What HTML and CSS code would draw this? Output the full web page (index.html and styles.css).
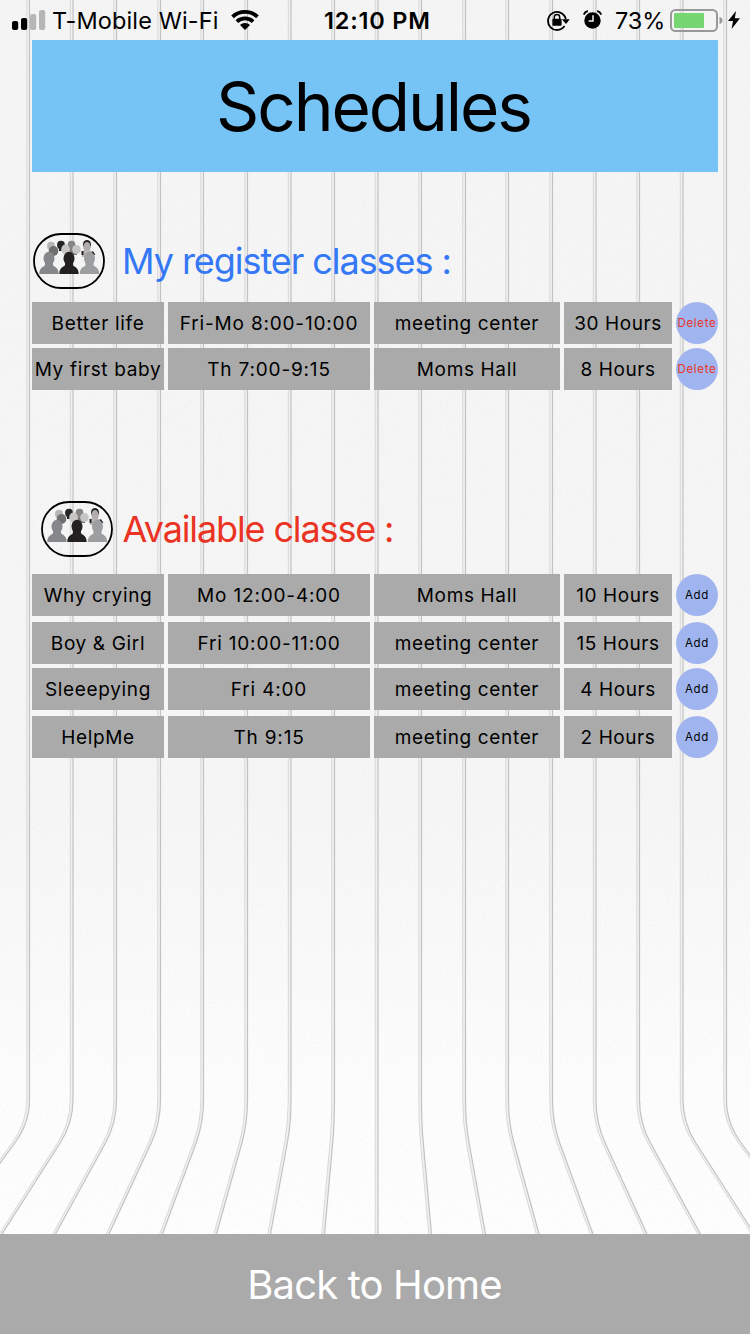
FILE: index.html
```html
<!DOCTYPE html>
<html lang="en">
<head>
<meta charset="utf-8">
<title>Schedules</title>
<link rel="stylesheet" href="styles.css">
</head>
<body>
<div class="screen">
  <svg class="backdrop" viewBox="0 0 750 1234" width="750" height="1234" fill="none" aria-hidden="true">
    <defs>
      <filter id="grain" x="0" y="0" width="100%" height="100%">
        <feTurbulence type="fractalNoise" baseFrequency="0.45" numOctaves="2" seed="4"/>
        <feColorMatrix values="0 0 0 0 0.5  0 0 0 0 0.5  0 0 0 0 0.5  0.22 0 0 0 -0.08"/>
      </filter>
      <g id="boards">
        <path d="M29.500 0V1100Q29.500 1123 14.800 1143L-52 1234"/>
        <path d="M73 0V1100Q73 1123 60.200 1143L2 1234"/>
        <path d="M116.500 0V1100Q116.500 1123 105.500 1143L55.500 1234"/>
        <path d="M160.500 0V1100Q160.500 1123 151.200 1143L109 1234"/>
        <path d="M203.500 0V1100Q203.500 1123 196.100 1143L162.500 1234"/>
        <path d="M247.500 0V1100Q247.500 1123 241.900 1143L216.500 1234"/>
        <path d="M291 0V1100Q291 1123 287.300 1143L270.500 1234"/>
        <path d="M334.500 0V1100Q334.500 1123 332.700 1143L324.500 1234"/>
        <path d="M378 0V1234"/>
        <path d="M421.500 0V1100Q421.500 1123 423.300 1143L431.500 1234"/>
        <path d="M465.500 0V1100Q465.500 1123 469.100 1143L485.500 1234"/>
        <path d="M508.500 0V1100Q508.500 1123 514 1143L539 1234"/>
        <path d="M552.500 0V1100Q552.500 1123 559.800 1143L593 1234"/>
        <path d="M596 0V1100Q596 1123 605.200 1143L647 1234"/>
        <path d="M639.500 0V1100Q639.500 1123 650.500 1143L700.500 1234"/>
        <path d="M683 0V1100Q683 1123 695.900 1143L754.500 1234"/>
        <path d="M726.500 0V1100Q726.500 1123 741.200 1143L808 1234"/>
      </g>
    </defs>
    <rect width="750" height="1234" filter="url(#grain)" class="grain"/>
    <use href="#boards" class="groove" x="-1.3"/>
    <use href="#boards" class="edge" x="-2.7"/>
    <use href="#boards" class="seam"/>
  </svg>

  <header class="status">
    <svg class="signal" width="34" height="20" viewBox="0 0 34 20"><rect x="0" y="11" width="6.200" height="9" rx="2"/><rect x="9" y="8" width="6.200" height="12" rx="2"/><g fill="#b6b6b6"><rect x="18" y="4" width="6.200" height="16" rx="2"/><rect x="27" y="0" width="6.200" height="20" rx="2"/></g></svg>
    <span class="carrier">T-Mobile Wi-Fi</span>
    <svg class="wifi" width="28" height="20" viewBox="0 0 28 20"><path d="M14 0C8.500 0 3.800 2 .2 5.400L2.900 8.200A16 16 0 0 1 25.100 8.200L27.800 5.400C24.200 2 19.500 0 14 0Z"/><path d="M14 6.600C10.300 6.600 7 8 4.600 10.200L7.200 12.900A10 10 0 0 1 20.800 12.900L23.400 10.200C21 8 17.700 6.600 14 6.600Z"/><path d="M14 13C12 13 10.300 13.700 9 15L14 20 19 15C17.700 13.700 16 13 14 13Z"/></svg>
    <span class="clock">12:10 PM</span>
    <svg class="lock" width="23" height="21" viewBox="0 0 23 21"><path d="M17.500 16A9 9 0 1 1 18.800 9" fill="none" stroke="#000" stroke-width="1.800"/><path d="M14.800 9.300H22.800L19 14Z"/><rect x="5.400" y="8.800" width="9.200" height="7" rx="1"/><path d="M7.300 9V7.200a2.700 2.700 0 0 1 5.400 0V9" fill="none" stroke="#000" stroke-width="1.500"/></svg>
    <svg class="alarm" width="19" height="20" viewBox="0 0 19 20"><circle cx="9.500" cy="10.500" r="8.200"/><path d="M.8 4.600Q1.800 1.800 4.800 1M18.200 4.600Q17.200 1.800 14.200 1" stroke="#000" stroke-width="1.900" fill="none"/><path d="M10 5.200V11H5.600" fill="none" stroke="#f4f4f4" stroke-width="1.500"/></svg>
    <span class="percent">73%</span>
    <svg class="battery" width="53" height="23" viewBox="0 0 53 23"><rect x="1" y="1" width="46" height="21" rx="4.500" fill="none" stroke="#999" stroke-width="2"/><rect x="4" y="4" width="30" height="15" rx="1" fill="#76d672"/><path d="M49.500 8Q52.500 8.800 52.500 11.500T49.500 15Z" fill="#999"/></svg>
    <svg class="bolt" width="12" height="18" viewBox="0 0 12 18"><path d="M8 0 0 10H5L3.600 18 12 7.300H6.800Z"/></svg>
  </header>

  <h1 class="title"><span>Schedules</span></h1>

  <main class="content">
    <section class="section registered">
      <div class="heading">
        <svg class="crowd" width="72" height="56" viewBox="0 0 72 56">
          <defs>
            <g id="person"><ellipse cx="0" cy="-14.500" rx="5.500" ry="6.700"/><path d="M-4-12V-8C-4.500-6-9.700-6.500-9.700 1H9.700C9.700-6.500 4.500-6 4-8V-12Z"/></g>
            <g id="small-head"><ellipse rx="3.900" ry="4.200"/><path d="M-2 3V6H2V3Z"/></g>
            <g id="group">
              <rect x="1" y="1" width="70" height="54" rx="27" fill="none" stroke="#000" stroke-width="1.800"/>
              <use href="#small-head" x="18" y="13" fill="#b5b5b5"/>
              <use href="#small-head" x="28" y="12" fill="#242424"/>
              <use href="#small-head" x="38.500" y="12" fill="#858585"/>
              <ellipse cx="54" cy="11.500" rx="4" ry="4.500" fill="#222"/>
              <ellipse cx="54" cy="14" rx="3.600" ry="5" fill="#b1abae"/>
              <path d="M51 17H57L60 21V24H49V20Z" fill="#b8b1b5"/>
              <path d="M49.500 18V22M59 18.500 61.500 22" stroke="#222" stroke-width="2"/>
              <ellipse cx="20.500" cy="18" rx="4.800" ry="5" fill="#6f6f6f"/>
              <path d="M36 17H44V22H38Z" fill="#777"/>
              <ellipse cx="32.500" cy="16.500" rx="4.300" ry="5" fill="#c9c5c3"/>
              <ellipse cx="43.500" cy="16.500" rx="4.300" ry="4.500" fill="#c5c5c5"/>
              <use href="#person" x="16" y="40" fill="#85878a"/>
              <use href="#person" x="56.500" y="40" fill="#9c9ea0"/>
              <use href="#person" x="36" y="40" fill="#222021"/>
            </g>
          </defs>
          <use href="#group"/>
        </svg>
        <h2 class="label blue">My register classes :</h2>
      </div>
      <div class="rows">
        <div class="row"><span>Better life</span><span class="time">Fri-Mo 8:00-10:00</span><span>meeting center</span><span class="hours">30 Hours</span><button class="delete">Delete</button></div>
        <div class="row"><span>My first baby</span><span class="time">Th 7:00-9:15</span><span>Moms Hall</span><span class="hours">8 Hours</span><button class="delete">Delete</button></div>
      </div>
    </section>

    <section class="section available">
      <div class="heading">
        <svg class="crowd" width="72" height="56" viewBox="0 0 72 56"><use href="#group"/></svg>
        <h2 class="label red">Available classe :</h2>
      </div>
      <div class="rows">
        <div class="row wide-gap"><span>Why crying</span><span class="time">Mo 12:00-4:00</span><span>Moms Hall</span><span class="hours">10 Hours</span><button class="add">Add</button></div>
        <div class="row"><span>Boy &amp; Girl</span><span class="time">Fri 10:00-11:00</span><span>meeting center</span><span class="hours">15 Hours</span><button class="add">Add</button></div>
        <div class="row wide-gap"><span>Sleeepying</span><span class="time">Fri 4:00</span><span>meeting center</span><span class="hours">4 Hours</span><button class="add">Add</button></div>
        <div class="row"><span>HelpMe</span><span class="time">Th 9:15</span><span>meeting center</span><span class="hours">2 Hours</span><button class="add">Add</button></div>
      </div>
    </section>
  </main>

  <footer class="home"><span>Back to Home</span></footer>
</div>
</body>
</html>
```
FILE: styles.css
```css
* { box-sizing: border-box; }
body { margin: 0; font-family: Inter, "Liberation Sans", sans-serif; color: #000; }
.screen {
  position: relative;
  isolation: isolate;
  display: flex;
  flex-direction: column;
  width: 750px;
  height: 1334px;
  overflow: hidden;
  background: linear-gradient(#f5f5f5 0, #f6f6f6 800px, #fdfdfd 1080px, #fefefe 1234px);
}
.backdrop { position: absolute; inset: 0; z-index: -1; }
.grain { opacity: .6; }
.groove { stroke: #f0f0f0; stroke-width: 2; }
.edge { stroke: #d8d8d8; stroke-width: 1; }
.seam { stroke: #c2c2c2; stroke-width: 1.2; }

.status { display: flex; align-items: center; height: 40px; padding-left: 12px; white-space: nowrap; }
.status svg { flex: none; }
.signal { margin-right: 6px; }
.carrier { width: 168px; font-size: 23.5px; letter-spacing: .12px; }
.wifi { margin-left: 11px; }
.clock { width: 108px; margin-left: 65px; padding-top: 1px; font-size: 23.5px; font-weight: 600; letter-spacing: .8px; }
.lock { margin-left: 115px; }
.alarm { margin-left: 13px; }
.percent { width: 49px; margin-left: 13px; font-size: 23.5px; letter-spacing: -.1px; }
.battery { margin-left: 6px; }
.bolt { margin-left: 5px; }

.title {
  display: flex;
  align-items: center;
  justify-content: center;
  height: 132px;
  margin: 0 32px;
  padding-right: 3px;
  background: #76c4f5;
  font-size: 67.5px;
  font-weight: 400;
  letter-spacing: -2.1px;
}
.content { flex: 1; padding: 61px 32px 0; }
.heading { display: flex; align-items: center; height: 56px; }
.registered .heading { padding-left: 1px; gap: 17px; }
.available { padding-top: 111px; }
.available .heading { padding-left: 8.5px; gap: 10px; }
.label { margin: 0; font-size: 36px; font-weight: 400; letter-spacing: -1.05px; white-space: nowrap; }
.blue { color: #3478f6; }
.red { color: #eb3323; letter-spacing: -1.13px; }
.rows { display: flex; flex-direction: column; gap: 4px; margin-top: 13px; }
.available .rows { margin-top: 17px; }
.row { display: grid; grid-template-columns: 132px 202px 186px 108px 42px; gap: 4px; height: 42px; }
.wide-gap { margin-bottom: 2px; }
.row span {
  display: flex;
  align-items: center;
  justify-content: center;
  background: #aaa;
  font-size: 19px;
  letter-spacing: .65px;
  white-space: nowrap;
}
.row .time { letter-spacing: .82px; }
.row .hours { letter-spacing: .57px; }
.row button {
  display: flex;
  align-items: center;
  justify-content: center;
  width: 42px;
  height: 42px;
  padding: 0;
  border: 0;
  border-radius: 50%;
  background: #a0b5ef;
  color: #000;
  font-family: inherit;
  font-size: 11.5px;
  letter-spacing: .7px;
}
.row .delete { color: #eb3323; }
.home {
  display: flex;
  align-items: center;
  justify-content: center;
  height: 100px;
  padding-right: 1px;
  background: #aaa;
  color: #fff;
  font-size: 40px;
  letter-spacing: -.85px;
}
```
